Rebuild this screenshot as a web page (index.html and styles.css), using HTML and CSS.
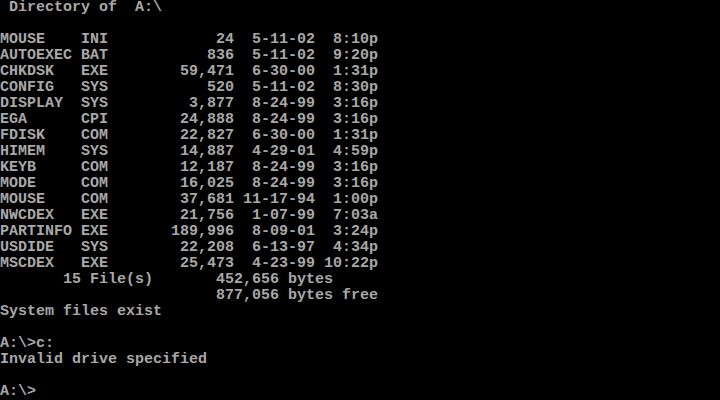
FILE: index.html
```html
<!DOCTYPE html>
<html>
<head>
<meta charset="utf-8">
<link rel="stylesheet" href="styles.css">
</head>
<body>
<pre class="screen"> Directory of  A:\

MOUSE    INI            24  5-11-02  8:10p
AUTOEXEC BAT           836  5-11-02  9:20p
CHKDSK   EXE        59,471  6-30-00  1:31p
CONFIG   SYS           520  5-11-02  8:30p
DISPLAY  SYS         3,877  8-24-99  3:16p
EGA      CPI        24,888  8-24-99  3:16p
FDISK    COM        22,827  6-30-00  1:31p
HIMEM    SYS        14,887  4-29-01  4:59p
KEYB     COM        12,187  8-24-99  3:16p
MODE     COM        16,025  8-24-99  3:16p
MOUSE    COM        37,681 11-17-94  1:00p
NWCDEX   EXE        21,756  1-07-99  7:03a
PARTINFO EXE       189,996  8-09-01  3:24p
USDIDE   SYS        22,208  6-13-97  4:34p
MSCDEX   EXE        25,473  4-23-99 10:22p
       15 File(s)       452,656 bytes
                        877,056 bytes free
System files exist

A:\&gt;c:
Invalid drive specified

A:\&gt;</pre>
</body>
</html>
```
FILE: styles.css
```css
html, body {
  margin: 0;
  padding: 0;
  background: #000;
  width: 720px;
  height: 400px;
  overflow: hidden;
}
.screen {
  margin: 0;
  padding: 0;
  font-family: "Liberation Mono", "DejaVu Sans Mono", monospace;
  font-size: 15px;
  font-weight: bold;
  line-height: 16px;
  color: #a8a8a8;
  white-space: pre;
}
```
